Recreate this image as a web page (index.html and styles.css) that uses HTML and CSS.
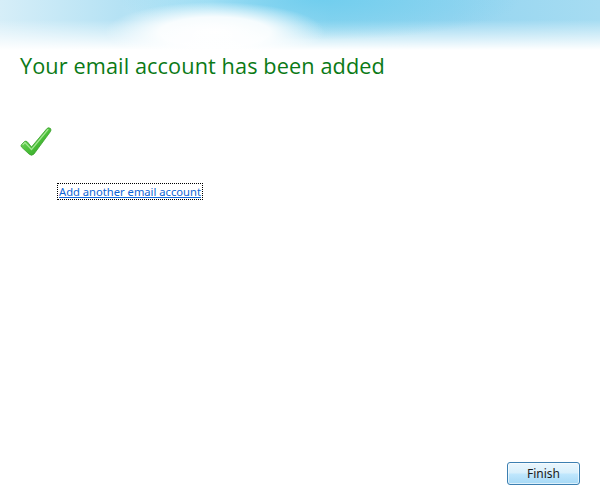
FILE: index.html
```html
<!DOCTYPE html>
<html lang="en">
<head>
    <meta charset="UTF-8">
    <title>Email account added</title>
    <link rel="stylesheet" href="styles.css">
</head>
<body>
    <div class="window">
        <div class="banner"></div>
        <div class="content">
            <h1>Your email account has been added</h1>
            <div class="check">
                <svg width="32" height="31" viewBox="0 0 32 31">
                    <defs>
                        <linearGradient id="g" x1="0" y1="0" x2="1" y2="1">
                            <stop offset="0" stop-color="#8ee07a"/>
                            <stop offset="0.5" stop-color="#4cc13a"/>
                            <stop offset="1" stop-color="#2e9c22"/>
                        </linearGradient>
                    </defs>
                    <path d="M1.5 18.5 L4.5 15.5 Q6 14.5 7.5 16 L11.5 21 L27 2.5 Q28.5 1 30.5 2.5 Q31.5 4 30.5 5.5 L14 28 Q11.5 30.5 9 28 L1.5 21 Q0.5 19.5 1.5 18.5 Z" fill="url(#g)" stroke="#3aa02c" stroke-width="0.8"/>
                    <path d="M3 18.5 L5 16.5 L11.5 23.5 L28 3.5" fill="none" stroke="#b8f0a8" stroke-width="1.2" stroke-linecap="round" opacity="0.8"/>
                </svg>
            </div>
            <a href="#" class="add-link">Add another email account</a>
        </div>
        <div class="footer">
            <button class="finish">Finish</button>
        </div>
    </div>
</body>
</html>
```

FILE: styles.css
```css
body {
    margin: 0;
    background: #fff;
    font-family: "Open Sans", "Noto Sans", sans-serif;
}
.window {
    width: 600px;
    height: 500px;
    display: flex;
    flex-direction: column;
    background: #fff;
}
.banner {
    height: 50px;
    background:
        radial-gradient(ellipse 110px 30px at 215px 32px, #ffffff 0%, rgba(255,255,255,0.9) 50%, rgba(255,255,255,0) 100%),
        radial-gradient(ellipse 200px 40px at 320px 0px, rgba(110,205,238,0.9) 0%, rgba(110,205,238,0) 100%),
        linear-gradient(to bottom, rgba(255,255,255,0) 0%, rgba(255,255,255,0) 40%, #ffffff 100%),
        linear-gradient(to right, #d6eef8 0%, #b5e2f4 20%, #bfe9f8 35%, #8ed5ef 55%, #95d5f0 75%, #a6dcf2 100%);
}
.content {
    flex: 1;
    padding: 0 20px;
}
h1 {
    margin: 1px 0 0;
    font-size: 21.7px;
    font-weight: normal;
    color: #0b7a16;
    letter-spacing: 0.1px;
}
.check {
    margin-top: 46px;
    height: 31px;
}
.add-link {
    display: inline-block;
    margin: 27px 0 0 38px;
    font-family: "Noto Sans", sans-serif;
    font-size: 11.2px;
    color: #0f66d6;
    text-decoration: underline;
    outline: 1px dotted #000;
    padding: 0 1px;
    line-height: 15px;
}
.footer {
    display: flex;
    justify-content: flex-end;
    padding: 0 20px 15px;
}
.finish {
    width: 73px;
    height: 23px;
    border: 1px solid #3c7fb1;
    border-radius: 3px;
    background: linear-gradient(to bottom, #eaf6fd 0%, #d9f0fc 45%, #bee6fd 55%, #a7d9f5 100%);
    box-shadow: inset 0 0 0 1px rgba(255,255,255,0.6);
    font-family: "Noto Sans", sans-serif;
    font-size: 12px;
    color: #1a1a1a;
    padding: 0;
}
```
